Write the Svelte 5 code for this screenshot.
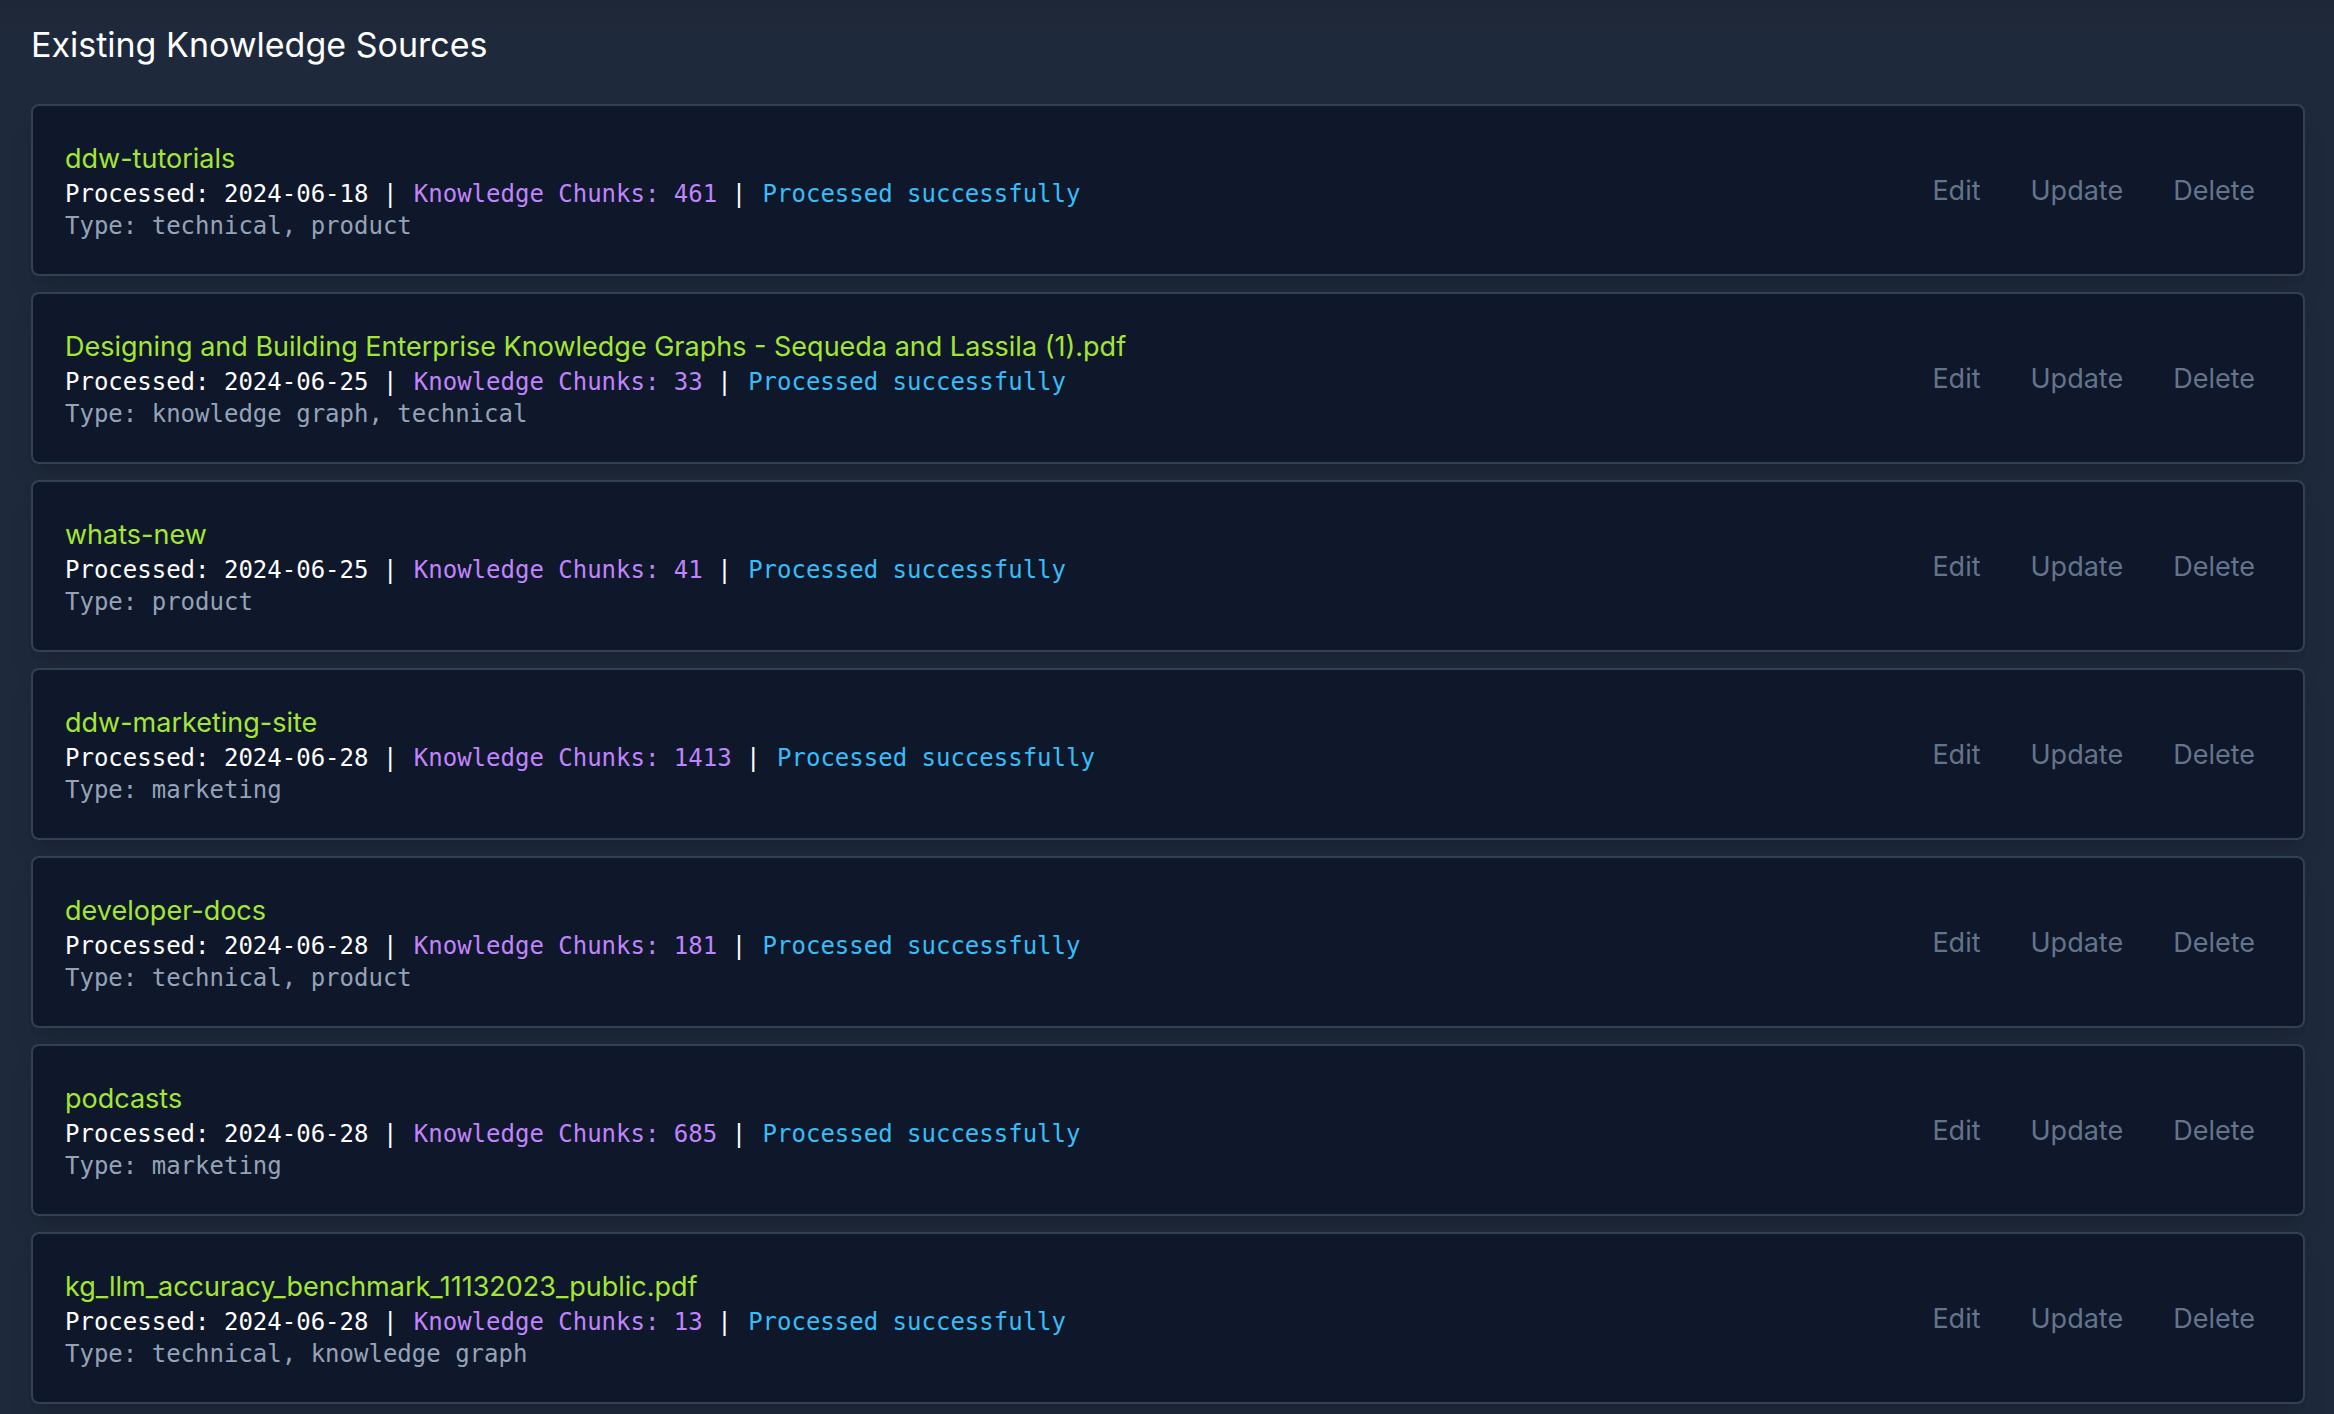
<script>
  const sources = [
    { name: 'ddw-tutorials', date: '2024-06-18', chunks: 461, type: 'technical, product' },
    { name: 'Designing and Building Enterprise Knowledge Graphs - Sequeda and Lassila (1).pdf', date: '2024-06-25', chunks: 33, type: 'knowledge graph, technical' },
    { name: 'whats-new', date: '2024-06-25', chunks: 41, type: 'product' },
    { name: 'ddw-marketing-site', date: '2024-06-28', chunks: 1413, type: 'marketing' },
    { name: 'developer-docs', date: '2024-06-28', chunks: 181, type: 'technical, product' },
    { name: 'podcasts', date: '2024-06-28', chunks: 685, type: 'marketing' },
    { name: 'kg_llm_accuracy_benchmark_11132023_public.pdf', date: '2024-06-28', chunks: 13, type: 'technical, knowledge graph' },
  ];
</script>

<main>
  <h1>Existing Knowledge Sources</h1>
  <ul>
    {#each sources as source}
      <li>
        <div class="info">
          <h2>{source.name}</h2>
          <p>Processed: {source.date} | <span class="chunks">Knowledge Chunks: {source.chunks}</span> | <span class="status">Processed successfully</span></p>
          <p class="type">Type: {source.type}</p>
        </div>
        <div class="actions">
          <button type="button">Edit</button>
          <button type="button">Update</button>
          <button type="button">Delete</button>
        </div>
      </li>
    {/each}
  </ul>
</main>

<style>
  :global(body) {
    background: #1e293b;
  }
  main {
    padding: 20px 29px 11px 31px;
    background: linear-gradient(#1e2736, #1e293b 40px);
    font-family: Inter, sans-serif;
    color: #fff;
  }
  h1 {
    margin: 0 0 34px;
    font-size: 34px;
    line-height: 50px;
    font-weight: 400;
  }
  ul {
    display: flex;
    flex-direction: column;
    gap: 16px;
    margin: 0;
    padding: 0;
    list-style: none;
  }
  li {
    display: flex;
    align-items: center;
    justify-content: space-between;
    padding: 32px;
    border: 2px solid #334155;
    border-radius: 8px;
    background: #0f172a;
    box-shadow: 0 20px 30px -6px rgb(0 0 0 / 0.1), 0 8px 12px -8px rgb(0 0 0 / 0.1);
  }
  h2 {
    margin: 0;
    padding-top: 2px;
    font-size: 27px;
    line-height: 38px;
    font-weight: 400;
    color: #a3e635;
  }
  p {
    margin: 0;
    font-family: "DejaVu Sans Mono", monospace;
    font-size: 24px;
    line-height: 32px;
  }
  p span {
    margin-left: 2px;
  }
  .chunks {
    color: #c084fc;
  }
  .status {
    color: #38bdf8;
  }
  .type {
    color: #94a3b8;
  }
  .actions {
    display: flex;
    gap: 18px;
  }
  button {
    padding: 10px 16px 8px;
    border: 0;
    background: none;
    font: inherit;
    font-size: 27px;
    line-height: 40px;
    color: #64748b;
    cursor: pointer;
  }
</style>
